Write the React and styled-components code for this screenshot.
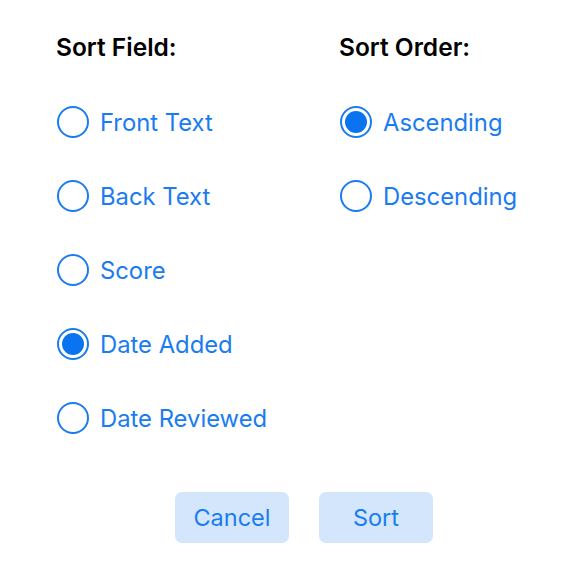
import { useState } from 'react'
import styled, { createGlobalStyle } from 'styled-components'

const Global = createGlobalStyle`
    body {
        margin: 0;
        background: #ffffff;
        font-family: 'Inter', 'Liberation Sans', sans-serif;
    }
`

const Page = styled.div`
    width: 574px;
    height: 564px;
    box-sizing: border-box;
    padding: 33px 0 0 56px;
    display: flex;
    flex-direction: column;
`

const Columns = styled.div`
    display: flex;
`

const Column = styled.div`
    width: ${({ width }) => width}px;
    display: flex;
    flex-direction: column;
`

const Heading = styled.div`
    font-size: 24.5px;
    font-weight: 600;
    color: #000000;
    line-height: 28px;
    height: 28px;
    margin-bottom: 45px;
`

const Option = styled.div`
    display: flex;
    align-items: center;
    height: 32px;
    margin-bottom: 42px;
    cursor: pointer;
`

const Circle = styled.div`
    width: 32px;
    height: 32px;
    box-sizing: border-box;
    border-radius: 50%;
    border: 2px solid #1a7cf0;
    display: flex;
    align-items: center;
    justify-content: center;
    margin-left: 1px;
    margin-right: 11px;

    &::after {
        content: '';
        width: 22px;
        height: 22px;
        border-radius: 50%;
        background: #0a74f0;
        display: ${({ checked }) => (checked ? 'block' : 'none')};
    }
`

const Label = styled.span`
    font-size: 23.8px;
    color: #1a7cf0;
`

const Buttons = styled.div`
    display: flex;
    gap: 30px;
    padding-left: 119px;
    margin-top: 16px;
`

const Button = styled.button`
    width: 114px;
    height: 51px;
    border: none;
    border-radius: 7px;
    background: #d3e6fc;
    color: #1a7cf0;
    font-family: 'Inter', 'Liberation Sans', sans-serif;
    font-size: 23.5px;
`

const fields = ['Front Text', 'Back Text', 'Score', 'Date Added', 'Date Reviewed']
const orders = ['Ascending', 'Descending']

export default () => {
    const [field, setField] = useState('Date Added')
    const [order, setOrder] = useState('Ascending')

    return (
        <Page>
            <Global />
            <Columns>
                <Column width={283}>
                    <Heading>Sort Field:</Heading>
                    {fields.map(f => (
                        <Option key={f} onClick={() => setField(f)}>
                            <Circle checked={field === f} />
                            <Label>{f}</Label>
                        </Option>
                    ))}
                </Column>
                <Column width={200}>
                    <Heading>Sort Order:</Heading>
                    {orders.map(o => (
                        <Option key={o} onClick={() => setOrder(o)}>
                            <Circle checked={order === o} />
                            <Label>{o}</Label>
                        </Option>
                    ))}
                </Column>
            </Columns>
            <Buttons>
                <Button>Cancel</Button>
                <Button>Sort</Button>
            </Buttons>
        </Page>
    )
}
